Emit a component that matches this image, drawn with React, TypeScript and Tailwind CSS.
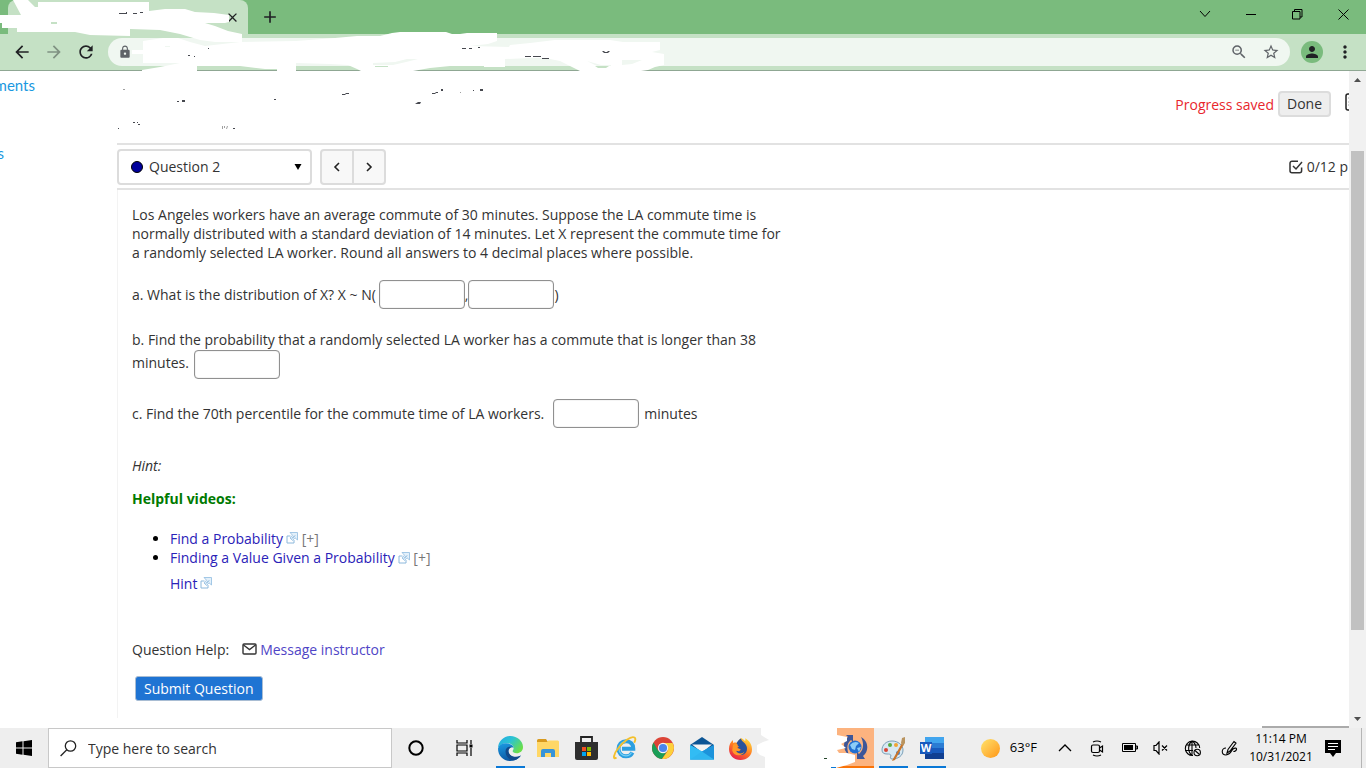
import type { ReactNode } from "react";
import {
  MdAdd,
  MdArrowBack,
  MdArrowForward,
  MdClose,
  MdLock,
  MdMoreVert,
  MdPerson,
  MdRefresh,
  MdStarOutline,
  MdZoomOut,
} from "react-icons/md";

/* ---------- Browser chrome ---------- */

function TabStrip() {
  return (
    <div className="flex h-[34px] items-stretch justify-between bg-[#7abb7d] text-[#202124]">
      <div className="flex">
        <div className="ml-2 flex w-60 items-center justify-end rounded-t-lg bg-[#c5e1c5] pr-2">
          <button aria-label="Close tab">
            <MdClose size={15} />
          </button>
        </div>
        <button aria-label="New tab" className="ml-3">
          <MdAdd size={20} />
        </button>
      </div>
      <div className="flex h-7 items-center text-black">
        <button aria-label="Search tabs" className="flex w-[46px] justify-center">
          <svg width="12" height="8" viewBox="0 0 12 8" fill="none" stroke="currentColor">
            <path d="M1 1l5 5.500L11 1" />
          </svg>
        </button>
        <button aria-label="Minimize" className="flex w-[46px] justify-center">
          <svg width="11" height="11" viewBox="0 0 11 11" fill="none" stroke="currentColor">
            <path d="M0 5.500h10" />
          </svg>
        </button>
        <button aria-label="Restore" className="flex w-[46px] justify-center">
          <svg width="11" height="11" viewBox="0 0 11 11" fill="none" stroke="currentColor">
            <path d="M.5 2.500h7.500v7.500H.500zM2.500 2.500V.500h7.500v7.500H8" />
          </svg>
        </button>
        <button aria-label="Close window" className="flex w-[46px] justify-center">
          <svg width="11" height="11" viewBox="0 0 11 11" fill="none" stroke="currentColor">
            <path d="M.5.500l10 10M10.500.500l-10 10" />
          </svg>
        </button>
      </div>
    </div>
  );
}

function Toolbar() {
  return (
    <div className="flex h-[37px] items-center border-b border-[#8fa793] bg-[#c5e1c5] text-[#202124]">
      <button aria-label="Back" className="flex w-8 justify-center pl-3">
        <MdArrowBack size={20} className="shrink-0" />
      </button>
      <button aria-label="Forward" className="flex w-8 justify-center pl-3 text-[#7f9182]">
        <MdArrowForward size={20} className="shrink-0" />
      </button>
      <button aria-label="Reload" className="flex w-8 justify-center pl-3">
        <MdRefresh size={20} className="shrink-0" />
      </button>
      <div className="ml-3 flex h-7 flex-1 items-center justify-between rounded-full bg-[#f0f7f1] px-[10px] text-[#5f6368]">
        <MdLock size={14} />
        <div className="flex items-center gap-[14px]">
          <MdZoomOut size={18} />
          <MdStarOutline size={18} />
        </div>
      </div>
      <button
        aria-label="Profile"
        className="ml-[11px] flex h-[22px] w-[22px] items-center justify-center rounded-full bg-[#7abb7d]"
      >
        <MdPerson size={18} />
      </button>
      <button aria-label="Menu" className="ml-3 mr-[11px]">
        <MdMoreVert size={20} />
      </button>
    </div>
  );
}

/* Painted-over strokes that hide the tab title, address and page heading. */
function BrushStrokes() {
  return (
    <svg
      className="pointer-events-none absolute left-0 top-0"
      width="680"
      height="135"
      viewBox="0 0 680 135"
      aria-hidden="true"
    >
      <path fill="#7abb7d" d="M0 0H8V24Q8 31 3 33.500L0 34Z" />
      <path
        fill="#fff"
        d="M13 0H28L35 7H38V2H149V11L165 9H185L195 12L214 13L229 15V22L225 23H205L215 26L228 31L242 34V42L215 42L200 40L180 34L160 30L130 29V36L90 35L75 32H17V28H2V23H0V15H21Z"
      />
      <path
        fill="#fff"
        d="M143 41L163 38H178L190 42L205 46L240 42L296 41L335 38L357 36L380 36L392 33L400 32H446L452 34H460L467 33H497V41L488 44L470 46L509 47L510 45L530 43L555 40H610L623 42H660V50L652 52L664 54V65L655 67L648 70L641 71H580L572 67L560 61L545 58H530L505 59V67H484V66H450L430 68L413 71H361L357 69L348 65L330 64L296 63V71H277V69H265L240 66H197V71H142V70L160 67L180 63H143V54H132V50H143Z"
      />
      <g fill="#c5e1c5">
        <path d="M51 22h6v2h-6z" />
        <path d="M375 66h13v1h-13zM595 66h14l-3 2h-8z" />
      </g>
      <g fill="#f0f7f1">
        <path d="M165 46h5v1h-5zM373 63l22-1 12-3h11l-12 3-13 3h-20zM587 61l14 4h10v1h-14zM622 60h20l-10 4-10 1z" />
      </g>
      <g fill="#46484f">
        <path d="M119 13h8v1h-8zM126 12h1v2h-1zM133 13h4v1h-4zM140 12h3v1h-3z" />
        <path d="M188 55h2v1h-2zM194 56h1v1h-1zM208 48h1v1h-1z" />
        <path d="M462 48h4v1h-4zM469 48h3v1h-3zM478 47h2v1h-2zM525 56h6v1h-6zM533 56h8v1h-8zM542 58h7v1h-7zM602 51h2l1 1h2l1-1h2l-2 2h-4z" />
        <path d="M177 101h2v1h-2zM182 100h3v2h-3zM274 99h2v1h-2zM342 94h3l1-1h3v1h-3l-1 1h-3z" />
        <path d="M415 104l3-2h3l-1 2zM432 93h3l1-1h2v1h-2l-1 1h-3zM441 89h2v2h-2zM473 90h1v1h-1zM480 89h3v2h-3z" />
        <path d="M118 128h1v1h-1zM133 122h2v1h-2zM137 122h1v1h-1zM138 124h2v1h-2zM233 128h2v1h-2z" />
      </g>
      <path
        fill="#a0a0a0"
        d="M123 89h2v1h-2zM460 92h1v1h-1zM222 126h1v3h-1zM224 126h1v2h-1zM227 126h1l-1 3h-1z"
      />
    </svg>
  );
}

function Scrollbar() {
  return (
    <div className="flex w-[17px] shrink-0 flex-col items-center bg-[#f1f1f1]" aria-hidden="true">
      <svg width="17" height="17" viewBox="0 0 17 17" className="shrink-0">
        <path d="M5 11l3.500-4L12 11z" fill="#505050" />
      </svg>
      <div className="min-h-0 flex-[63]" />
      <div className="min-h-0 w-[13px] flex-[479] bg-[#c1c1c1]" />
      <div className="min-h-0 flex-[81]" />
      <svg width="17" height="17" viewBox="0 0 17 17" className="shrink-0">
        <path d="M5 6l3.500 4L12 6z" fill="#505050" />
      </svg>
    </div>
  );
}

/* ---------- Assessment page ---------- */

function Blank({ label }: { label: string }) {
  return (
    <input
      type="text"
      aria-label={label}
      className="h-[29px] w-[86px] rounded-[4px] border border-[#909090] bg-white px-1 shadow-[inset_0_0_1px_#999]"
    />
  );
}

function ExternalIcon() {
  return (
    <svg width="12" height="12" viewBox="0 0 12 12" fill="none" className="mb-1 ml-[3px] inline-block">
      <path d="M4.500 4H1v7h7V8" stroke="#8cb8dc" />
      <path d="M4 .5h7.500V8L9 5.800 6.500 8.500 4 6 6.500 3.200z" fill="#e3f0fa" stroke="#8fbbdf" strokeWidth=".8" />
      <path d="M6 6.500l3-3" stroke="#4b8fc7" strokeWidth=".8" />
    </svg>
  );
}

function CheckBoxIcon() {
  return (
    <svg width="14" height="14" viewBox="0 0 14 14" fill="none" stroke="#333" strokeWidth="1.500">
      <path d="M9 1.200H3a2 2 0 0 0-2 2v7.600a2 2 0 0 0 2 2h7.600a2 2 0 0 0 2-2V7.500" />
      <path d="M4 6l3 3 6-7" />
    </svg>
  );
}

function Chevron({ d }: { d: string }) {
  return (
    <svg width="8" height="10" viewBox="0 0 8 10" fill="none" stroke="#222" strokeWidth="1.600">
      <path d={d} />
    </svg>
  );
}

function Assessment() {
  return (
    <main className="flex min-w-0 flex-1 flex-col overflow-hidden font-['Open_Sans',sans-serif] text-sm leading-[19px] text-[#333]">
      <header className="flex h-[72px] shrink-0 items-center justify-end gap-1 pb-[6px]">
        <span className="text-[#e8262d]">Progress saved</span>
        <button className="h-[26px] rounded-[4px] border-2 border-[#dcdcdc] bg-[#eee] px-[7px] leading-5">
          Done
        </button>
        <svg width="4" height="18" viewBox="0 0 4 18" fill="none" className="mb-1 ml-[10px]" aria-hidden="true">
          <path d="M4 1H3a2 2 0 0 0-2 2v12a2 2 0 0 0 2 2h1" stroke="#222" strokeWidth="1.500" />
          <path d="M3 5h1M3 9h1M3 12h1" stroke="#aaa" />
        </svg>
      </header>

      <nav className="flex h-[47px] shrink-0 items-center justify-between border-y-2 border-[#e2e2e2]">
        <div className="flex h-9 gap-2">
          <button
            aria-haspopup="listbox"
            className="flex w-[195px] items-center rounded-[4px] border-2 border-[#dcdcdc] px-3"
          >
            <span className="h-3 w-3 rounded-full border border-black bg-[#00009c]" />
            <span className="ml-[6px]">Question 2</span>
            <svg width="8" height="6" viewBox="0 0 8 6" className="ml-auto mr-[-4px]">
              <path d="M.5 0h7L4 6z" fill="#000" />
            </svg>
          </button>
          <div className="flex w-[66px] divide-x-2 divide-[#dcdcdc] overflow-hidden rounded-[4px] border-2 border-[#dcdcdc] bg-[#f8f8f8]">
            <button aria-label="Previous question" className="flex flex-1 items-center justify-center">
              <Chevron d="M6 1L2 5l4 4" />
            </button>
            <button aria-label="Next question" className="flex flex-1 items-center justify-center">
              <Chevron d="M2 1l4 4-4 4" />
            </button>
          </div>
        </div>
        <div className="flex items-center gap-1 whitespace-nowrap pr-px">
          <CheckBoxIcon />
          <span>0/12 p</span>
        </div>
      </nav>

      <section className="mb-[10px] flex-1 border-l border-[#f3f3f3] pl-[14px] pt-[15px]">
        <p>
          Los Angeles workers have an average commute of 30 minutes. Suppose the LA commute time is
          <br />
          normally distributed with a standard deviation of 14 minutes. Let X represent the commute time for
          <br />a randomly selected LA worker. Round all answers to 4 decimal places where possible.
        </p>
        <p className="mt-[17px] flex h-[30px] items-center">
          <span className="mr-[3px]">a. What is the distribution of X? X ~ N(</span>
          <Blank label="Mean" />,<Blank label="Standard deviation" />)
        </p>
        <p className="mt-[21px]">
          b. Find the probability that a randomly selected LA worker has a commute that is longer than 38
        </p>
        <p className="flex h-[30px] items-center gap-[5px]">
          <span className="pb-1">minutes.</span>
          <Blank label="Probability" />
        </p>
        <p className="mt-[19px] flex h-[30px] items-center gap-[5px]">
          <span className="mr-1">c. Find the 70th percentile for the commute time of LA workers.</span>
          <Blank label="70th percentile" />
          minutes
        </p>
        <p className="mt-7 italic">Hint:</p>
        <h2 className="mt-[14px] font-bold text-[#007a00]">Helpful videos:</h2>
        <ul className="ml-[38px] mt-[21px] list-disc text-[#777] marker:text-black">
          <li>
            <a href="#probability" className="text-[#2a22b8]">
              Find a Probability
              <ExternalIcon />
            </a>{" "}
            <button>[+]</button>
          </li>
          <li>
            <a href="#value" className="text-[#2a22b8]">
              Finding a Value Given a Probability
              <ExternalIcon />
            </a>{" "}
            <button>[+]</button>
          </li>
        </ul>
        <p className="ml-[38px] mt-[6px]">
          <a href="#hint" className="text-[#2a22b8]">
            Hint
            <ExternalIcon />
          </a>
        </p>
        <div className="mt-[47px] flex items-center">
          <span>Question Help:</span>
          <a href="#message" className="ml-[13px] flex items-center gap-[3px] text-[#4f45c6]">
            <svg width="15" height="12" viewBox="0 0 15 12" fill="none" stroke="#333" strokeWidth="1.400">
              <rect x="1" y="1" width="13" height="10" rx="1" />
              <path d="M1.500 2l6 4.500 6-4.500" />
            </svg>
            Message instructor
          </a>
        </div>
        <button className="ml-[3px] mt-[17px] h-[25px] rounded-[3px] border border-[#a9bdd3] bg-[#1f74d3] px-2 text-white">
          Submit Question
        </button>
      </section>
    </main>
  );
}

/* ---------- Taskbar ---------- */

function EdgeIcon() {
  return (
    <svg width="25" height="25" viewBox="0 0 24 24">
      <defs>
        <linearGradient id="edgeTop" x1="0" y1="0" x2="1" y2=".6">
          <stop offset="0" stopColor="#22a8e6" />
          <stop offset=".5" stopColor="#2cc3d2" />
          <stop offset="1" stopColor="#6adf4a" />
        </linearGradient>
        <linearGradient id="edgeBody" x1="0" y1="0" x2=".3" y2="1">
          <stop offset="0" stopColor="#1b9be3" />
          <stop offset="1" stopColor="#0c59a4" />
        </linearGradient>
      </defs>
      <path d="M0 12C0 5 5.500 0 12 0s12 5 12 10.500c0 4-3 6-6 6-2.500 0-4-1-4-2 0-.6 1-1 1-3 0-2.500-3-4.500-6.500-4.500C4 7 1 9 0 12z" fill="url(#edgeTop)" />
      <path d="M0 12c1-3.500 4-5.500 8-5 4 .3 7 2 7 4.500-1-1.500-5-1-5 3 0 4 5 7.500 10.500 5l1.500-.7C20 22 16.500 24 12 24 5 24 0 19 0 12z" fill="url(#edgeBody)" />
      <path d="M7.500 13c-1.500 6 3.500 10.500 8 10.300 3-.9 5-2.300 6.500-4.500-6 3-11.500 0-12-4 0-2.500 1.500-3.800 3.500-4.300C10.500 10 8.300 11 7.500 13z" fill="#114a8b" />
    </svg>
  );
}

function FolderIcon() {
  return (
    <svg width="22" height="19" viewBox="0 0 22 19">
      <path d="M0 1.500Q0 0 1.500 0H9l2 3h11v5H0z" fill="#d89a1e" />
      <path d="M0 3h10l1.500-1.500H21l1 1V18H0z" fill="#ffd766" />
      <path d="M4 18v-6q0-2 2-2h10q2 0 2 2v6h-4v-4H8v4z" fill="#3794d8" />
    </svg>
  );
}

function StoreIcon() {
  return (
    <svg width="23" height="24" viewBox="0 0 23 24">
      <path d="M6 7V1h11v6" fill="none" stroke="#222" strokeWidth="1.800" />
      <path d="M0 6h23v16q0 2-2 2H2q-2 0-2-2z" fill="#2e2e2e" />
      <path d="M7 11h4v4H7z" fill="#f25022" />
      <path d="M12 11h4v4h-4z" fill="#7fba00" />
      <path d="M7 16h4v4H7z" fill="#00a4ef" />
      <path d="M12 16h4v4h-4z" fill="#ffb900" />
    </svg>
  );
}

function ExplorerIcon() {
  return (
    <svg width="24" height="24" viewBox="0 0 24 24" fill="none">
      <path d="M19.500 16.500c-1.200 2.300-3.600 3.800-6.500 3.800-4.500 0-7.500-3.400-7.500-7.500S8.600 5.200 13 5.200s7.300 3 7.300 7.500H9" stroke="#2c9fe0" strokeWidth="4" />
      <path d="M18.500 16.500c-1 2-3 3.300-5.500 3.300-4 0-7-3-7-7S9 5.700 13 5.700" stroke="#79d0f5" strokeWidth="1.200" />
      <path d="M3.500 21.500C-.5 24.500.5 18 5 12.500 10 6 18-.5 21.500 1.500c1.600 1 .9 3-.3 5.300" stroke="#f3c02c" strokeWidth="1.900" />
    </svg>
  );
}

function ChromeIcon() {
  return (
    <svg width="22" height="22" viewBox="0 0 22 22">
      <circle cx="11" cy="11" r="11" fill="#dc4437" />
      <path d="M1.500 5.500A11 11 0 0 0 10 22l5.500-8.500-4.500 2.500-5-2.500z" fill="#1a9e57" />
      <path d="M10 22A11 11 0 0 0 20.600 6H11l4.800 3.500v4.200z" fill="#fdd03b" />
      <circle cx="11" cy="11" r="5.200" fill="#f5f5f5" />
      <circle cx="11" cy="11" r="4.100" fill="#4a86ed" />
    </svg>
  );
}

function MailIcon() {
  return (
    <svg width="24" height="23" viewBox="0 0 24 23">
      <path d="M0 8L12 0l12 8v5H0z" fill="#0c5595" />
      <path d="M2 7.500h20L12 15.500z" fill="#f3f3f3" />
      <path d="M0 8l12 6.500L24 8v14.500H0z" fill="#2ab0ee" />
      <path d="M24 8v14.500H0L11 15z" fill="#1c93db" />
      <path d="M0 8v14.500h24L12 14.500z" fill="#35bff5" opacity=".8" />
    </svg>
  );
}

function FirefoxIcon() {
  return (
    <svg width="23" height="23" viewBox="0 0 23 23">
      <defs>
        <linearGradient id="foxFire" x1=".8" y1="0" x2=".2" y2="1">
          <stop offset="0" stopColor="#ffdc3d" />
          <stop offset=".5" stopColor="#ff7a22" />
          <stop offset="1" stopColor="#e3174f" />
        </linearGradient>
      </defs>
      <path d="M12 1c2 1 3 2 4 3 1-.5 0-3 0-3 5 3 7 7 7 11.500C23 18.500 18 23 11.500 23S0 18.500 0 12C0 8 1.500 5 4 3v3c1.500-.7 3-.5 4-.3C9 4 10.500 2.500 12 1z" fill="url(#foxFire)" />
      <path d="M8 5.500C9 3.500 10 2.500 12 1.500c0 3 6.500 5 6 10.500-.3 4-3 6-6.500 6S6 16 6 13l4 1.500 2-2-3.500-1.200L10 9H7z" fill="#29529b" />
      <path d="M4 8c2-2 4-1 5 0l-1.200 3L11 12c0 2.500-3 2.500-4 1.500 1.500 4 6.500 3.500 8.500 1-2 5-10.500 5.500-12.300-1z" fill="#ff9829" />
    </svg>
  );
}

function SyncIcon() {
  return (
    <svg width="25" height="25" viewBox="0 0 25 25">
      <circle cx="12" cy="12" r="6.500" fill="#216ed0" />
      <path d="M7 10q4-5 9-2l-3 3-1 4-3-1zM14 13l4-1-2 5z" fill="#8ccdf8" />
      <path d="M6 20C-1 15 0 5 5 2L3 0h7v7L8 5c-5 4-4 10-2 15zM18 2c8 4 8 15 2 19l2 3h-8v-7l2 2c5-4 5-11 2-17z" fill="#3d5698" />
    </svg>
  );
}

function PaintIcon() {
  return (
    <svg width="25" height="25" viewBox="0 0 25 25">
      <path d="M11 5c6 0 11 4 11 9 0 6-5 9-11 9-2 0-2-2-1-3 0-2-2-2-4-2-3 0-5-1-5-4C1 9 5 5 11 5z" fill="#d7e8f2" stroke="#7ba0b8" />
      <circle cx="5" cy="14" r="2" fill="#d84434" />
      <circle cx="9" cy="9" r="2" fill="#58a944" />
      <circle cx="15" cy="9" r="2" fill="#f0a533" />
      <circle cx="17" cy="17" r="2" fill="#3b7fce" />
      <path d="M21 7L12 23l-1 2 3-1 9-16z" fill="#c8752b" />
      <path d="M20 7l1-5 3-1v6l-2 3z" fill="#b9945f" />
    </svg>
  );
}

function WordIcon() {
  return (
    <svg width="24" height="22" viewBox="0 0 24 22" aria-hidden="true">
      <path d="M5 0h19v6H5z" fill="#41a5ee" />
      <path d="M5 6h19v5H5z" fill="#2b7cd3" />
      <path d="M5 11h19v5H5z" fill="#185abd" />
      <path d="M5 16h19v6H5z" fill="#103f91" />
      <path d="M0 5h12v12H0z" fill="#185abd" />
      <text x="6" y="15" textAnchor="middle" fill="#fff" className="font-['Open_Sans',sans-serif] text-[11px] font-bold">
        W
      </text>
    </svg>
  );
}

function Pinned({ name, bar, children }: { name: string; bar?: boolean; children: ReactNode }) {
  return (
    <button aria-label={name} className="flex h-10 flex-col items-center">
      <span className="flex h-[38px] items-center justify-center pt-[2px]">{children}</span>
      {bar && <span className="h-[2px] w-[29px] bg-[#0a78d6]" />}
    </button>
  );
}

function Taskbar() {
  return (
    <footer className="relative flex h-10 shrink-0 items-stretch bg-[#eee] font-['Open_Sans',sans-serif] text-black">
      <button aria-label="Start" className="flex w-12 items-center justify-center">
        <svg width="16" height="16" viewBox="0 0 16 16">
          <path d="M0 2.200L6.500 1.300V7.500H0zM7.500 1.200L16 0v7.500H7.500zM0 8.500h6.500v6.200L0 13.800zM7.500 8.500H16V16l-8.500-1.200z" />
        </svg>
      </button>
      <label className="flex w-[344px] items-center border border-[#c8c8c8] bg-white pl-[11px]">
        <svg width="17" height="17" viewBox="0 0 17 17" fill="none" stroke="#222" strokeWidth="1.300">
          <circle cx="10.500" cy="6" r="5.200" />
          <path d="M6.800 9.800L.6 16" />
        </svg>
        <input
          type="text"
          aria-label="Search"
          placeholder="Type here to search"
          className="ml-[11px] min-w-0 flex-1 pt-[2px] text-sm outline-none placeholder:text-[#333]"
        />
      </label>
      <button aria-label="Cortana" className="flex w-12 items-center justify-center">
        <svg width="16" height="16" viewBox="0 0 16 16" fill="none" stroke="#000" strokeWidth="2">
          <circle cx="8" cy="8" r="6.700" />
        </svg>
      </button>
      <button aria-label="Task view" className="flex w-12 items-center justify-center">
        <svg width="17" height="16" viewBox="0 0 17 16" fill="none" stroke="#000" strokeWidth="1.200">
          <path d="M1 0v3h10V0M1 16v-3h10v3M1 5h10v6H1zM15 0v4M15 8v8" />
          <path d="M13.500 4.500h3v3h-3z" fill="#000" stroke="none" />
        </svg>
      </button>
      <div className="ml-[3px] grid w-[460px] grid-cols-12">
        <Pinned name="Edge" bar><EdgeIcon /></Pinned>
        <Pinned name="File Explorer"><FolderIcon /></Pinned>
        <Pinned name="Store"><StoreIcon /></Pinned>
        <Pinned name="Internet Explorer"><ExplorerIcon /></Pinned>
        <Pinned name="Chrome"><ChromeIcon /></Pinned>
        <Pinned name="Mail"><MailIcon /></Pinned>
        <Pinned name="Firefox"><FirefoxIcon /></Pinned>
        <span className="col-span-2" />
        <button aria-label="Sync" className="flex items-center justify-center border-b-2 border-[#f97308] bg-[#fcb37f]">
          <SyncIcon />
        </button>
        <Pinned name="Paint" bar><PaintIcon /></Pinned>
        <Pinned name="Word" bar><WordIcon /></Pinned>
      </div>

      <svg className="pointer-events-none absolute left-[755px] top-0" width="102" height="40" viewBox="0 0 102 40" aria-hidden="true">
        <path
          fill="#fff"
          d="M6 0H82V7L92 9V13L86 16L91 20L82 22L84 25H92L100 27V34L92 37L81 40H10V29L5 27L2 24V17L8 14L14 12L6 7Z"
        />
        <path d="M69 30h3v1h-3z" fill="#24462a" />
        <path d="M76 39h5v1h-5z" fill="#0a78d6" />
      </svg>

      <div className="ml-auto flex items-center">
        <button className="flex items-center text-[13px]">
          <span className="mr-[10px] h-[19px] w-[19px] rounded-full bg-linear-to-br from-[#ffe36a] to-[#ff9500]" />
          63°F
        </button>
        <button aria-label="Show hidden icons" className="ml-[21px]">
          <svg width="14" height="8" viewBox="0 0 14 8" fill="none" stroke="#000" strokeWidth="1.300">
            <path d="M1 7l6-6 6 6" />
          </svg>
        </button>
        <button aria-label="Meet now" className="ml-[18px]">
          <svg width="14" height="17" viewBox="0 0 14 17" fill="none" stroke="#000" strokeWidth="1.200">
            <path d="M3 2q4-2 8 0M3 15q4 2 8 0" />
            <rect x="1.500" y="5" width="8" height="7.500" rx="1.500" />
            <path d="M9.500 8l3-2v6l-3-2" />
          </svg>
        </button>
        <button aria-label="Battery" className="ml-[18px]">
          <svg width="16" height="10" viewBox="0 0 16 10">
            <path d="M.5.500h13v8H.5zM14 3h1.500v3H14z" fill="none" stroke="#000" />
            <path d="M2 2h9v5H2z" />
          </svg>
        </button>
        <button aria-label="Volume muted" className="ml-[15px]">
          <svg width="16" height="14" viewBox="0 0 16 14" fill="none" stroke="#000" strokeWidth="1.200">
            <path d="M1 4.500h2l3-3.500v12L3 9.500H1zM9 4.500l5 5M14 4.500l-5 5" />
          </svg>
        </button>
        <button aria-label="Network" className="ml-[15px]">
          <svg width="18" height="17" viewBox="0 0 18 17" fill="none" stroke="#000" strokeWidth="1.100">
            <path d="M9 15.500A7.200 7.200 0 1 1 15.700 8M8 15.500C3 11 4 4 8 1c3 2 4 4 4 7M2 5h12.500M1 10.500h8M8 1v14" />
            <circle cx="13.200" cy="12.500" r="3.200" />
            <path d="M11 10.500l4.500 4" />
          </svg>
        </button>
        <button aria-label="Pen" className="ml-[19px]">
          <svg width="18" height="17" viewBox="0 0 18 17" fill="none" stroke="#000" strokeWidth="1.100">
            <path d="M6 13l1-3.500L13 1.500l2 1.500-6 8zM5 8c-5 0-5 7 0 7 5-.5 5-4 7-6 2-1.500 4-1 3.500.5-.5 1.500-2.500 2.500-3 1.500" />
          </svg>
        </button>
        <button className="ml-[10px] w-16 text-center text-[12px] leading-[18px]">
          11:14 PM
          <br />
          10/31/2021
        </button>
        <button aria-label="Notifications" className="ml-3">
          <svg width="16" height="17" viewBox="0 0 16 17">
            <path d="M0 0h16v13h-5l-3 4-3-4H0z" />
            <path d="M3 3.500h10M3 6.500h10M3 9.500h7" stroke="#fff" />
          </svg>
        </button>
        <span className="ml-5 mr-1 h-10 w-px bg-[#b5b5b5]" />
      </div>
    </footer>
  );
}

export default function App() {
  return (
    <div className="relative flex h-screen flex-col overflow-hidden bg-white">
      <TabStrip />
      <Toolbar />
      <div className="relative flex min-h-0 flex-1">
        <aside className="w-[117px] shrink-0 overflow-hidden pt-1 font-['Lato',sans-serif] text-[15px] leading-5 text-[#1a98e0]">
          <div className="flex w-[35px] justify-end">
            <a href="#assignments">ments</a>
          </div>
          <div className="mt-12 flex w-1 justify-end">
            <a href="#s">s</a>
          </div>
        </aside>
        <Assessment />
        <Scrollbar />
        <span className="absolute bottom-0 right-[17px] h-[2px] w-[87px] bg-[#ababab]" />
      </div>
      <Taskbar />
      <BrushStrokes />
    </div>
  );
}
